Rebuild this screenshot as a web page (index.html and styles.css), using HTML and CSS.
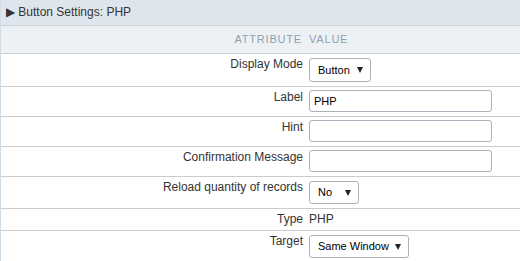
FILE: index.html
```html
<!DOCTYPE html>
<html lang="en">
<head>
    <meta charset="UTF-8">
    <title>Button Settings: PHP</title>
    <link rel="stylesheet" href="styles.css">
</head>
<body>
    <div class="panel">
        <div class="panel-title"><span class="arrow">&#9654;</span> Button Settings: PHP</div>

        <table class="props">
            <thead>
                <tr>
                    <th class="attr">Attribute</th>
                    <th class="val">Value</th>
                </tr>
            </thead>
            <tbody>
                <tr>
                    <td class="attr">Display Mode</td>
                    <td class="val">
                        <span class="select-wrap"><select class="select"><option>Button</option></select></span>
                    </td>
                </tr>
                <tr class="text-row">
                    <td class="attr">Label</td>
                    <td class="val"><input type="text" class="input" value="PHP"></td>
                </tr>
                <tr class="text-row">
                    <td class="attr">Hint</td>
                    <td class="val"><input type="text" class="input"></td>
                </tr>
                <tr class="text-row">
                    <td class="attr">Confirmation Message</td>
                    <td class="val"><input type="text" class="input"></td>
                </tr>
                <tr>
                    <td class="attr">Reload quantity of records</td>
                    <td class="val">
                        <span class="select-wrap"><select class="select select-small"><option>No</option></select></span>
                    </td>
                </tr>
                <tr>
                    <td class="attr">Type</td>
                    <td class="val plain">PHP</td>
                </tr>
                <tr>
                    <td class="attr">Target</td>
                    <td class="val">
                        <span class="select-wrap"><select class="select select-wide"><option>Same Window</option></select></span>
                    </td>
                </tr>
            </tbody>
        </table>
    </div>
</body>
</html>
```

FILE: styles.css
```css
* {
    margin: 0;
    padding: 0;
    box-sizing: border-box;
}

body {
    font-family: "Liberation Sans", Arial, sans-serif;
    font-size: 12px;
    color: #333;
    background: #fff;
}

.panel {
    border-left: 1px solid #cfdde8;
    width: 520px;
}

.panel-title {
    height: 26px;
    line-height: 24px;
    padding-left: 5px;
    background: #dfe5ec;
    border-bottom: 1px solid #cbd2d9;
    color: #333;
    font-size: 12px;
}

.arrow {
    font-size: 12px;
    color: #333;
}

.props {
    width: 100%;
    border-collapse: collapse;
}

.props th {
    height: 27px;
    background: #eef1f4;
    border-bottom: 1px solid #cdd1d5;
    font-size: 11px;
    font-weight: normal;
    letter-spacing: 0.8px;
    text-transform: uppercase;
    color: #8aa2b6;
    vertical-align: middle;
}

.props td {
    padding: 3px 3px;
    border-bottom: 1px solid #cccccc;
    vertical-align: top;
    line-height: 15px;
}

.props tr.text-row td {
    padding-bottom: 4px;
}

.props tr:last-child td {
    border-bottom: none;
}

.attr {
    width: 305px;
    text-align: right;
    padding-right: 3px;
}

.props th.attr {
    padding-right: 4px;
}

.props th.val {
    text-align: left;
    padding-left: 3px;
}

.props td.val {
    padding-left: 3px;
}

.plain {
    font-size: 12px;
}

.input {
    display: block;
    width: 183px;
    height: 22px;
    border: 1px solid #a9b2bc;
    border-radius: 3px;
    padding: 0 4px;
    font-family: inherit;
    font-size: 11px;
    color: #000;
}

.select-wrap {
    display: block;
    width: fit-content;
    position: relative;
    margin: 1px 0;
}

/* dropdown caret */
.select-wrap::after {
    content: "";
    position: absolute;
    right: 8px;
    top: 9px;
    border-left: 3px solid transparent;
    border-right: 3px solid transparent;
    border-top: 6px solid #222;
    pointer-events: none;
}

.select {
    -webkit-appearance: none;
    appearance: none;
    display: block;
    width: 62px;
    height: 24px;
    border: 1px solid #a9b2bc;
    border-radius: 3px;
    background: #fff;
    padding: 0 0 0 8px;
    font-family: inherit;
    font-size: 11px;
    color: #000;
}

.select-small {
    width: 50px;
    height: 23px;
}

.select-wide {
    width: 100px;
    height: 23px;
}
```
